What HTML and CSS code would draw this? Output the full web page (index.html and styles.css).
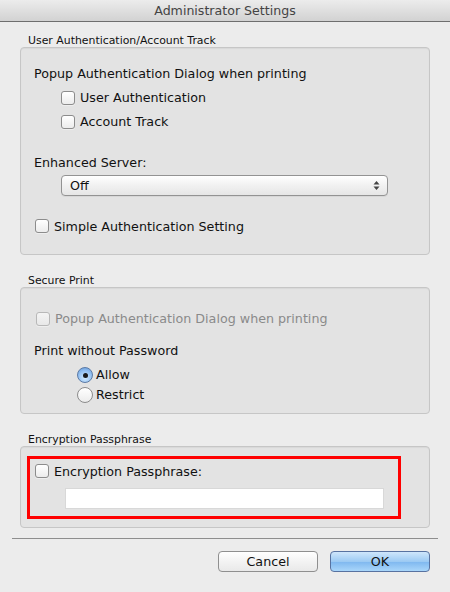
FILE: index.html
```html
<!DOCTYPE html>
<html>
<head>
<meta charset="utf-8">
<link rel="stylesheet" href="styles.css">
</head>
<body>
<div class="window">
  <div class="titlebar">Administrator Settings</div>
  <div class="content">
    <div class="group-label">User Authentication/Account Track</div>
    <div class="group box1">
      <div class="row">Popup Authentication Dialog when printing</div>
      <div class="row indent check-row gap6"><span class="cb"></span><span>User Authentication</span></div>
      <div class="row indent check-row gap6"><span class="cb"></span><span>Account Track</span></div>
      <div class="row gap23">Enhanced Server:</div>
      <div class="popup"><span>Off</span>
        <svg class="stepper" width="7" height="11" viewBox="0 0 7 11"><path d="M3.5 1 L6.5 4.5 L0.5 4.5 Z M3.5 10 L6.5 6.5 L0.5 6.5 Z" fill="#444"/></svg>
      </div>
      <div class="row check-row gap21 simple"><span class="cb"></span><span class="txt">Simple Authentication Setting</span></div>
    </div>

    <div class="group-label gl">Secure Print</div>
    <div class="group box2">
      <div class="row check-row disabled"><span class="cb cb-dis"></span><span>Popup Authentication Dialog when printing</span></div>
      <div class="row gap14">Print without Password</div>
      <div class="row radio-row gap6"><span class="rb rb-on"><span class="dot"></span></span><span>Allow</span></div>
      <div class="row radio-row gap2"><span class="rb"></span><span>Restrict</span></div>
    </div>

    <div class="group-label gl">Encryption Passphrase</div>
    <div class="group box3">
      <div class="highlight">
        <div class="row check-row"><span class="cb"></span><span class="txt">Encryption Passphrase:</span></div>
        <div class="field"></div>
      </div>
    </div>
  </div>
  <div class="separator"></div>
  <div class="buttons">
    <div class="btn">Cancel</div>
    <div class="btn btn-default">OK</div>
  </div>
</div>
</body>
</html>
```

FILE: styles.css
```css
* { box-sizing: border-box; }
html, body {
  margin: 0;
  padding: 0;
  background: #ececec;
}
body {
  font-family: "DejaVu Sans", "Liberation Sans", sans-serif;
  font-size: 12.7px;
  color: #111;
  width: 450px;
  height: 592px;
  overflow: hidden;
}
.window {
  width: 450px;
  height: 592px;
  display: flex;
  flex-direction: column;
}
.titlebar {
  height: 22px;
  line-height: 22px;
  text-align: center;
  font-size: 12.6px;
  color: #444;
  background: linear-gradient(#ececec, #d2d2d2);
  border-bottom: 1px solid #6e6e6e;
}
.content {
  padding: 11px 20px 0 20px;
  display: flex;
  flex-direction: column;
}
.group-label {
  font-size: 10.9px;
  line-height: 15px;
  height: 14px;
  padding-left: 8px;
  color: #111;
}
.gl { margin-top: 18px; }
.group {
  width: 410px;
  background: #e3e3e3;
  border: 1px solid #c6c6c6;
  border-radius: 4px;
  box-shadow: inset 0 1px 1px rgba(0,0,0,0.05);
  display: flex;
  flex-direction: column;
  align-items: flex-start;
}
.box1 { height: 208px; padding: 17px 0 0 13px; }
.box2 { height: 127px; padding: 22px 0 0 13px; }
.box3 { height: 82px; padding: 9px 0 0 6px; }
.row {
  height: 18px;
  line-height: 18px;
  display: flex;
  align-items: center;
  white-space: nowrap;
}
.indent { margin-left: 27px; }
.gap2 { margin-top: 2px; }
.gap6 { margin-top: 6px; }
.gap14 { margin-top: 14px; }
.gap21 { margin-top: 21px; }
.gap23 { margin-top: 23px; }
.check-row .cb { margin-right: 5px; }
.txt { position: relative; top: 1px; }
.simple { margin-left: 1px; }
.cb {
  width: 14px;
  height: 14px;
  border: 1px solid #8c8c8c;
  border-radius: 3px;
  background: linear-gradient(#ffffff, #ececec);
  box-shadow: 0 1px 0 rgba(255,255,255,0.4);
  flex: none;
}
.disabled { color: #8a8a8a; margin-left: 2px; }
.cb-dis { border-color: #b8b8b8; background: linear-gradient(#f4f4f4, #e8e8e8); }
.popup {
  margin-top: 3px;
  margin-left: 27px;
  width: 327px;
  height: 21px;
  border: 1px solid #939393;
  border-radius: 4px;
  background: linear-gradient(#ffffff, #f1f1f1 50%, #e6e6e6);
  display: flex;
  align-items: center;
  justify-content: space-between;
  padding: 0 7px 0 8px;
  box-shadow: 0 1px 0 rgba(0,0,0,0.05);
}
.stepper { display: block; }
.radio-row { margin-left: 43px; }
.rb {
  width: 16px;
  height: 16px;
  border: 1px solid #8c8c8c;
  border-radius: 50%;
  background: linear-gradient(#ffffff, #ececec);
  margin-right: 3px;
  flex: none;
  display: flex;
  align-items: center;
  justify-content: center;
}
.rb-on {
  border-color: #5b7aa6;
  background: radial-gradient(circle at 50% 70%, #d4ecff, #8fbdf0 60%, #5f96d8);
}
.dot {
  width: 5px;
  height: 5px;
  border-radius: 50%;
  background: #1a1a1a;
}
.highlight {
  width: 374px;
  height: 63px;
  border: 3px solid #ff0000;
  padding: 3px 0 0 5px;
  display: flex;
  flex-direction: column;
  align-items: flex-start;
}
.field {
  margin-top: 8px;
  margin-left: 30px;
  width: 319px;
  height: 21px;
  background: #ffffff;
  border: 1px solid #d8d8d8;
}
.separator {
  margin: 10px 0 0 12px;
  width: 426px;
  height: 1px;
  background: #8e8e8e;
}
.buttons {
  display: flex;
  margin-top: 12px;
  padding-left: 218px;
  gap: 12px;
}
.btn {
  width: 100px;
  height: 21px;
  line-height: 20px;
  text-align: center;
  border: 1px solid #8f8f8f;
  border-radius: 4px;
  background: linear-gradient(#ffffff, #f3f3f3 50%, #e9e9e9);
  font-size: 12.7px;
}
.btn-default {
  border-color: #5872a0;
  background: linear-gradient(#cfe6fb, #9ccaf3 50%, #7eb7ef 51%, #a9d6fa);
}
```
